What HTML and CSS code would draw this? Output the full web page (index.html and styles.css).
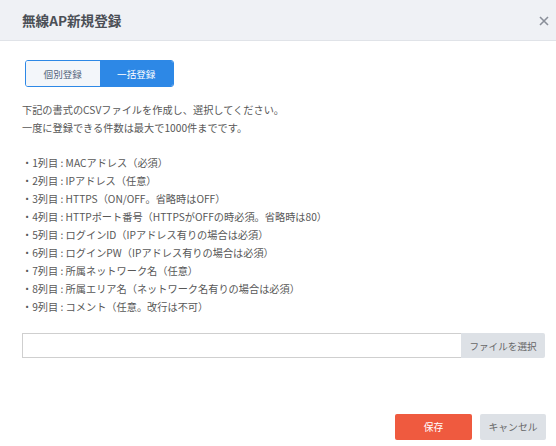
FILE: index.html
```html
<!DOCTYPE html>
<html lang="ja">
<head>
<meta charset="utf-8">
<link rel="stylesheet" href="styles.css">
</head>
<body>
<div class="modal">
  <div class="header">
    <h1 class="title">無線AP新規登録</h1>
    <span class="close">
      <svg width="10" height="10" viewBox="0 0 10 10"><path d="M1 1L9 9M9 1L1 9" stroke="#8a8f99" stroke-width="1.6"/></svg>
    </span>
  </div>
  <div class="content">
    <div class="tabs">
      <div class="tab">個別登録</div>
      <div class="tab active">一括登録</div>
    </div>
    <p class="desc">下記の書式のCSVファイルを作成し、選択してください。<br>一度に登録できる件数は最大で1000件までです。</p>
    <ul class="cols">
      <li>・1列目 : MACアドレス（必須）</li>
      <li>・2列目 : IPアドレス（任意）</li>
      <li>・3列目 : HTTPS（ON/OFF。省略時はOFF）</li>
      <li>・4列目 : HTTPポート番号（HTTPSがOFFの時必須。省略時は80）</li>
      <li>・5列目 : ログインID（IPアドレス有りの場合は必須）</li>
      <li>・6列目 : ログインPW（IPアドレス有りの場合は必須）</li>
      <li>・7列目 : 所属ネットワーク名（任意）</li>
      <li>・8列目 : 所属エリア名（ネットワーク名有りの場合は必須）</li>
      <li>・9列目 : コメント（任意。改行は不可）</li>
    </ul>
    <div class="file">
      <div class="file-input"></div>
      <div class="file-btn">ファイルを選択</div>
    </div>
  </div>
  <div class="footer">
    <div class="btn save">保存</div>
    <div class="btn cancel">キャンセル</div>
  </div>
</div>
</body>
</html>
```
FILE: styles.css
```css
html, body {
  margin: 0;
  padding: 0;
  background: #fff;
}
body {
  font-family: "Noto Sans CJK JP", "Noto Sans", sans-serif;
  color: #575757;
  font-size: 10.2px;
}
.modal {
  width: 556px;
  height: 446px;
  display: flex;
  flex-direction: column;
}
.header {
  height: 40px;
  background: #eff1f5;
  border-bottom: 1px solid #e0e3e8;
  display: flex;
  align-items: center;
  justify-content: space-between;
  padding: 0 7px 0 22px;
}
.title {
  margin: 0;
  font-size: 13.6px;
  font-weight: bold;
  color: #4b4f56;
}
.close {
  width: 10px;
  height: 10px;
  display: flex;
  margin-top: 1px;
}
.content {
  padding: 19px 11px 0 22px;
  flex: 1;
}
.tabs {
  display: flex;
  margin-left: 3px;
  width: 149px;
  height: 27px;
  border: 1px solid #2d88e6;
  border-radius: 3px;
  box-sizing: border-box;
  overflow: hidden;
}
.tab {
  flex: 1;
  display: flex;
  align-items: center;
  justify-content: center;
  background: #f3f6fa;
  color: #56667c;
  font-size: 9.6px;
}
.tab.active {
  background: #2d88e6;
  color: #fff;
}
.desc {
  margin: 14px 0 0;
  line-height: 18px;
}
.cols {
  list-style: none;
  margin: 17px 0 0;
  padding: 0;
  line-height: 18px;
}
.file {
  display: flex;
  margin-top: 17px;
  height: 25px;
}
.file-input {
  flex: 1;
  border: 1px solid #cfcfcf;
  border-right: none;
  box-sizing: border-box;
}
.file-btn {
  width: 84px;
  background: #dde1e6;
  color: #666;
  font-size: 9.6px;
  display: flex;
  align-items: center;
  justify-content: center;
  border-radius: 0 2px 2px 0;
}
.footer {
  display: flex;
  justify-content: flex-end;
  gap: 8px;
  padding: 0 10px 6px 0;
}
.btn {
  height: 26px;
  display: flex;
  align-items: center;
  justify-content: center;
  border-radius: 2px;
  font-size: 9.8px;
}
.save {
  width: 77px;
  background: #ef5a3f;
  color: #fff;
}
.cancel {
  width: 66px;
  background: #dde1e6;
  color: #666;
}
```
